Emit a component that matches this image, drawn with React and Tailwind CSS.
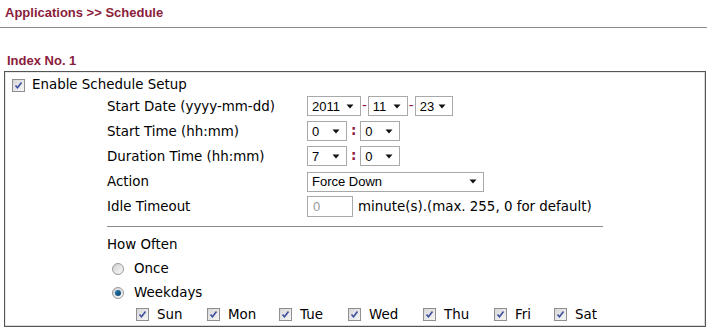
import React from "react";

const MAROON = "text-[#8b1c3c]";

function Check() {
  return (
    <span className="inline-flex h-[13px] w-[13px] shrink-0 items-center justify-center border border-[#8f8f8f] bg-gradient-to-br from-[#d8d8d8] to-[#f6f6f6]">
      <svg width="9" height="9" viewBox="0 0 9 9">
        <path d="M1.5 4.5 L3.5 6.8 L7.5 1.5" stroke="#3e4f9e" strokeWidth="1.6" fill="none" />
      </svg>
    </span>
  );
}

function Radio({ on }) {
  return (
    <span className="inline-flex h-[12px] w-[12px] shrink-0 items-center justify-center rounded-full border border-[#9a9a9a] bg-gradient-to-br from-[#d0d0d0] to-[#fafafa]">
      {on ? <span className="h-[6px] w-[6px] rounded-full bg-gradient-to-br from-[#2a7fb8] to-[#0b3f6a]" /> : null}
    </span>
  );
}

function Select({ value, w }) {
  return (
    <span
      className={`inline-flex h-[20px] items-center justify-between border border-[#a9a9a9] bg-white pl-[4px] pr-[6px] text-[13px] text-black ${w}`}
      style={{ fontFamily: '"Liberation Sans", Arial, sans-serif' }}
    >
      <span>{value}</span>
      <svg width="8" height="5" viewBox="0 0 8 5">
        <path d="M0.5 0.5 L7.5 0.5 L4 4.5 Z" fill="#111" />
      </svg>
    </span>
  );
}

function Row({ label, children }) {
  return (
    <div className="flex h-[25px] items-center">
      <div className="w-[302px] shrink-0 pl-[102px] pt-[1px]">{label}</div>
      <div className="flex items-center">{children}</div>
    </div>
  );
}

const days = [
  ["Sun", "w-[71px]"],
  ["Mon", "w-[72px]"],
  ["Tue", "w-[69px]"],
  ["Wed", "w-[75px]"],
  ["Thu", "w-[71px]"],
  ["Fri", "w-[60px]"],
  ["Sat", "w-[60px]"],
];

export default function App() {
  return (
    <div
      className="h-[333px] w-[709px] overflow-hidden bg-white text-[13.4px] text-black"
      style={{ fontFamily: '"DejaVu Sans", Verdana, sans-serif' }}
    >
      <div
        className={`flex h-[27px] items-center pl-[5px] pb-[1px] text-[13px] font-bold ${MAROON}`}
        style={{ fontFamily: '"Liberation Sans", Arial, sans-serif' }}
      >
        Applications &gt;&gt; Schedule
      </div>
      <div className="h-px w-[707px] bg-[#8a8a8a]" />
      <div
        className={`flex h-[43px] items-end pb-[1px] pl-[7px] text-[13px] font-bold ${MAROON}`}
        style={{ fontFamily: '"Liberation Sans", Arial, sans-serif' }}
      >
        Index No. 1
      </div>
      <div className="ml-[4px] h-[256px] w-[702px] border border-[#555] shadow-[inset_-1px_-1px_0_#d8d8d8,inset_1px_1px_0_#e8e8e8]">
        <div className="mt-[4px] flex h-[18px] items-center gap-[7px] pl-[7px]">
          <Check />
          <span>Enable Schedule Setup</span>
        </div>
        <Row label="Start Date (yyyy-mm-dd)">
          <Select value="2011" w="w-[54px]" />
          <span className={`px-[1px] ${MAROON}`}>-</span>
          <Select value="11" w="w-[40px]" />
          <span className={`px-[1px] ${MAROON}`}>-</span>
          <Select value="23" w="w-[38px]" />
        </Row>
        <Row label="Start Time (hh:mm)">
          <Select value="0" w="w-[40px]" />
          <span className={`px-[4px] font-bold ${MAROON}`}>:</span>
          <Select value="0" w="w-[40px]" />
        </Row>
        <Row label="Duration Time (hh:mm)">
          <Select value="7" w="w-[40px]" />
          <span className={`px-[4px] font-bold ${MAROON}`}>:</span>
          <Select value="0" w="w-[40px]" />
        </Row>
        <Row label="Action">
          <Select value="Force Down" w="w-[177px]" />
        </Row>
        <Row label="Idle Timeout">
          <span
            className="inline-flex h-[21px] w-[46px] items-center border border-[#a9a9a9] bg-white pl-[5px] text-[13px] text-[#9a9a9a]"
            style={{ fontFamily: '"Liberation Sans", Arial, sans-serif' }}
          >
            0
          </span>
          <span className="pl-[5px] pt-[1px]">minute(s).(max. 255, 0 for default)</span>
        </Row>
        <div className="ml-[102px] mt-[7px] h-px w-[496px] bg-[#8a8a8a]" />
        <div className="mt-[8px] flex h-[20px] items-center pl-[102px] pt-[1px]">How Often</div>
        <div className="mt-[2px] flex h-[24px] items-center gap-[10px] pl-[107px]">
          <Radio />
          <span className="pt-[1px]">Once</span>
        </div>
        <div className="flex h-[23px] items-center gap-[10px] pl-[107px]">
          <Radio on />
          <span className="pt-[1px]">Weekdays</span>
        </div>
        <div className="flex h-[22px] items-center pl-[131px]">
          {days.map(([d, w]) => (
            <div key={d} className={`flex items-center gap-[8px] ${w}`}>
              <Check />
              <span className="pt-[1px]">{d}</span>
            </div>
          ))}
        </div>
      </div>
    </div>
  );
}
